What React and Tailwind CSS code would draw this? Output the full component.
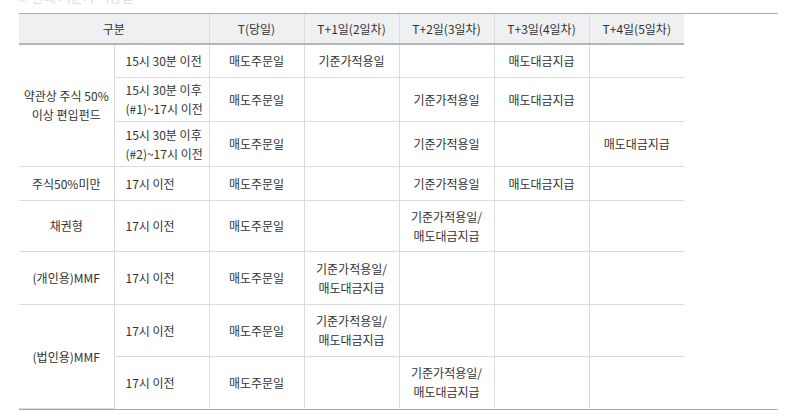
import React from 'react';

const headers = ['T(당일)', 'T+1일(2일차)', 'T+2일(3일차)', 'T+3일(4일차)', 'T+4일(5일차)'];

// each row: [group(optional), time, T, T+1, T+2, T+3, T+4]
const rows = [
  { h: 'h-[33px]', group: { label: ['약관상 주식 50%', '이상 편입펀드'], span: 3 }, time: ['15시 30분 이전'], cells: ['매도주문일', '기준가적용일', '', '매도대금지급', ''] },
  { h: 'h-[44px]', time: ['15시 30분 이후', '(#1)~17시 이전'], cells: ['매도주문일', '', '기준가적용일', '매도대금지급', ''] },
  { h: 'h-[45px]', time: ['15시 30분 이후', '(#2)~17시 이전'], cells: ['매도주문일', '', '기준가적용일', '', '매도대금지급'] },
  { h: 'h-[34px]', group: { label: ['주식50%미만'], span: 1 }, time: ['17시 이전'], cells: ['매도주문일', '', '기준가적용일', '매도대금지급', ''] },
  { h: 'h-[51px]', group: { label: ['채권형'], span: 1 }, time: ['17시 이전'], cells: ['매도주문일', '', '기준가적용일/|매도대금지급', '', ''] },
  { h: 'h-[53px]', group: { label: ['(개인용)MMF'], span: 1 }, time: ['17시 이전'], cells: ['매도주문일', '기준가적용일/|매도대금지급', '', '', ''] },
  { h: 'h-[52px]', group: { label: ['(법인용)MMF'], span: 2 }, time: ['17시 이전'], cells: ['매도주문일', '기준가적용일/|매도대금지급', '', '', ''] },
  { h: 'h-[52px]', time: ['17시 이전'], cells: ['매도주문일', '', '기준가적용일/|매도대금지급', '', ''] },
];

const Lines = ({ text }) =>
  text.split('|').map((t, i) => <div key={i}>{t}</div>);

export default function App() {
  return (
    <div className="w-[793px] h-[416px] bg-white overflow-hidden text-[#333] text-[12px] leading-[19px]" style={{ fontFamily: '"Noto Sans CJK KR", "Noto Sans", sans-serif' }}>
      {/* heading cut off at the top */}
      <div className="h-[13px] overflow-hidden pl-[16px]">
        <div className="-mt-[13px] text-[13px] text-[#ddd]">※ 환매 기준가 적용일</div>
      </div>
      <div className="ml-[19px] w-[759px] border-t border-b border-[#aaa]">
        <table className="w-[665px] border-collapse table-fixed text-center">
          <colgroup>
            {Array.from({ length: 7 }).map((_, i) => (
              <col key={i} className="w-[95px]" />
            ))}
          </colgroup>
          <thead>
            <tr className="h-[30px] bg-[#eef0f2] border-b-2 border-[#b4b4b4]">
              <th colSpan={2} className="font-normal">구분</th>
              {headers.map((h) => (
                <th key={h} className="font-normal border-l border-[#dcdcdc]">{h}</th>
              ))}
            </tr>
          </thead>
          <tbody>
            {rows.map((row, ri) => (
              <tr key={ri} className={`${row.h} ${ri < rows.length - 1 ? 'border-b border-[#dcdcdc]' : ''}`}>
                {row.group && (
                  <td rowSpan={row.group.span} className="align-middle border-b border-[#dcdcdc]">
                    {row.group.label.map((l) => <div key={l}>{l}</div>)}
                  </td>
                )}
                <td className="text-left pl-[11px] border-l border-[#dcdcdc]">
                  {row.time.map((t) => <div key={t}>{t}</div>)}
                </td>
                {row.cells.map((c, ci) => (
                  <td key={ci} className="border-l border-[#dcdcdc]">
                    <Lines text={c} />
                  </td>
                ))}
              </tr>
            ))}
          </tbody>
        </table>
      </div>
    </div>
  );
}
